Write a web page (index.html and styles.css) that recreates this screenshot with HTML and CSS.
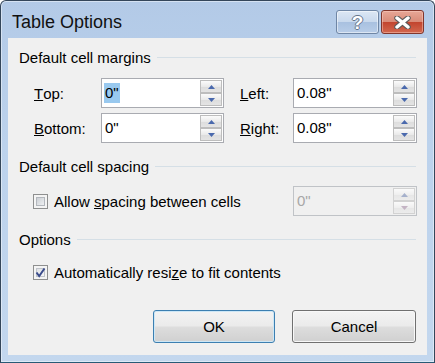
FILE: index.html
```html
<!DOCTYPE html>
<html lang="en">
<head>
    <meta charset="UTF-8">
    <meta name="viewport" content="width=device-width, initial-scale=1.0">
    <title>Table Options</title>
    <link rel="stylesheet" href="styles.css">
</head>
<body>
    <div class="window">
        <div class="titlebar">
            <span class="title">Table Options</span>
            <div class="caption-buttons">
                <span class="cap-btn help-btn">?</span>
                <span class="cap-btn close-btn">
                    <svg width="17" height="13" viewBox="0 0 17 13">
                        <path d="M3 2 L14 11 M14 2 L3 11" stroke="#5a5a5a" stroke-width="5.5" stroke-linecap="round"/>
                        <path d="M3 2 L14 11 M14 2 L3 11" stroke="#ffffff" stroke-width="3.5" stroke-linecap="round"/>
                    </svg>
                </span>
            </div>
        </div>

        <div class="client">
            <!-- margins -->
            <div class="group-head">
                <span>Default cell margins</span>
                <span class="rule"></span>
            </div>
            <div class="margins">
                <label class="field-label"><u>T</u>op:</label>
                <div class="spin-box">
                    <span class="value"><span class="selected">0"</span></span>
                    <div class="spinner">
                        <span class="spin-btn"><svg width="7" height="4"><polygon points="0,4 7,4 3.5,0" fill="#4a69ad"/></svg></span>
                        <span class="spin-btn"><svg width="7" height="4"><polygon points="0,0 7,0 3.5,4" fill="#4a69ad"/></svg></span>
                    </div>
                </div>
                <label class="field-label right-col"><u>L</u>eft:</label>
                <div class="spin-box">
                    <span class="value">0.08"</span>
                    <div class="spinner">
                        <span class="spin-btn"><svg width="7" height="4"><polygon points="0,4 7,4 3.5,0" fill="#4a69ad"/></svg></span>
                        <span class="spin-btn"><svg width="7" height="4"><polygon points="0,0 7,0 3.5,4" fill="#4a69ad"/></svg></span>
                    </div>
                </div>

                <label class="field-label"><u>B</u>ottom:</label>
                <div class="spin-box">
                    <span class="value">0"</span>
                    <div class="spinner">
                        <span class="spin-btn"><svg width="7" height="4"><polygon points="0,4 7,4 3.5,0" fill="#4a69ad"/></svg></span>
                        <span class="spin-btn"><svg width="7" height="4"><polygon points="0,0 7,0 3.5,4" fill="#4a69ad"/></svg></span>
                    </div>
                </div>
                <label class="field-label right-col"><u>R</u>ight:</label>
                <div class="spin-box">
                    <span class="value">0.08"</span>
                    <div class="spinner">
                        <span class="spin-btn"><svg width="7" height="4"><polygon points="0,4 7,4 3.5,0" fill="#4a69ad"/></svg></span>
                        <span class="spin-btn"><svg width="7" height="4"><polygon points="0,0 7,0 3.5,4" fill="#4a69ad"/></svg></span>
                    </div>
                </div>
            </div>

            <!-- spacing -->
            <div class="group-head spaced">
                <span>Default cell spacing</span>
                <span class="rule"></span>
            </div>
            <div class="spacing-row">
                <span class="check"><span class="check-inner"></span></span>
                <span class="check-text">Allow <u>s</u>pacing between cells</span>
                <div class="spin-box disabled">
                    <span class="value">0"</span>
                    <div class="spinner">
                        <span class="spin-btn"><svg width="7" height="4"><polygon points="0,4 7,4 3.5,0" fill="#a6b1cc"/></svg></span>
                        <span class="spin-btn"><svg width="7" height="4"><polygon points="0,0 7,0 3.5,4" fill="#c4b4c4"/></svg></span>
                    </div>
                </div>
            </div>

            <!-- options -->
            <div class="group-head spaced">
                <span>Options</span>
                <span class="rule"></span>
            </div>
            <div class="option-row">
                <span class="check checked">
                    <span class="check-inner"></span>
                    <svg class="tick" width="13" height="13" viewBox="0 0 13 13">
                        <path d="M2.5 6.5 L5.2 10 L10.5 2.5" stroke="#3b4c8c" stroke-width="2" fill="none"/>
                    </svg>
                </span>
                <span class="check-text">Automatically resi<u>z</u>e to fit contents</span>
            </div>

            <div class="dialog-buttons">
                <button type="button" class="btn default">OK</button>
                <button type="button" class="btn cancel">Cancel</button>
            </div>
        </div>
    </div>
</body>
</html>
```
FILE: styles.css
```css
body {
    margin: 0;
    font-family: "Liberation Sans", Arial, sans-serif;
    font-size: 15px;
    line-height: 17px;
    color: #000;
    background: #fff;
}
.window {
    width: 435px;
    height: 363px;
    box-sizing: border-box;
    border: 1px solid #34465a;
    border-bottom-color: #285a76;
    border-radius: 6px 6px 0 0;
    background: linear-gradient(#b3cae7, #bcd2ec 40%, #c3d7ee);
    box-shadow: inset 0 0 0 1px rgba(255, 255, 255, 0.45);
}
.titlebar {
    height: 37px;
    display: flex;
    justify-content: space-between;
}
.title {
    font-size: 18px;
    line-height: 21px;
    padding: 11px 0 0 11px;
    color: #111;
}
.caption-buttons {
    display: flex;
    gap: 2px;
    margin: 9px 10px 0 0;
}
.cap-btn {
    width: 43px;
    height: 24px;
    box-sizing: border-box;
    border-radius: 3px;
    display: flex;
    align-items: center;
    justify-content: center;
}
.help-btn {
    border: 1px solid #6f86a5;
    background: linear-gradient(#dce7f4, #c9d9ed 48%, #a9c1e0 52%, #b8cde8);
    box-shadow: inset 0 0 0 1px rgba(255, 255, 255, 0.5);
    color: #fff;
    font-weight: bold;
    font-size: 19px;
    text-shadow: 1px 0 0 #66768c, -1px 0 0 #66768c, 0 1px 0 #66768c, 0 -1px 0 #66768c;
}
.close-btn {
    border: 1px solid #81362c;
    background: linear-gradient(#e7a797, #d98c79 48%, #c2452f 52%, #d3684f);
    box-shadow: inset 0 0 0 1px rgba(255, 210, 200, 0.45);
}
.client {
    margin: 0 7px;
    height: 317px;
    box-sizing: border-box;
    padding: 11px 10px 0 11px;
    background: #f0f0f0;
}
.group-head {
    display: flex;
    align-items: center;
    gap: 6px;
    height: 17px;
    margin-right: 1px;
}
.group-head.spaced {
    margin-top: 15px;
}
.rule {
    flex: 1;
    height: 1px;
    background: #d5dfe6;
}
.margins {
    display: grid;
    grid-template-columns: 67px 123px 69px 124px;
    grid-auto-rows: 30px;
    row-gap: 5px;
    margin: 12px 0 0 15px;
}
.field-label {
    display: flex;
    align-items: center;
}
.right-col {
    padding-left: 16px;
}
.spin-box {
    display: flex;
    align-items: center;
    box-sizing: border-box;
    height: 30px;
    border: 1px solid #a9abb1;
    background: #fff;
    padding: 0 1px 0 2px;
}
.value {
    flex: 1;
    line-height: 20px;
    padding-left: 1px;
}
.selected {
    background: #99c9ef;
    display: inline-block;
    padding: 0 1px 0 0;
    margin-left: -1px;
    padding-left: 1px;
}
.spinner {
    display: flex;
    flex-direction: column;
    width: 22px;
}
.spin-btn {
    height: 13px;
    box-sizing: border-box;
    border: 1px solid #bdbdbd;
    background: linear-gradient(#fbfbfb, #eaeaea 50%, #dcdcdc 51%, #e4e4e4);
    display: flex;
    align-items: center;
    justify-content: center;
}
.spin-box.disabled {
    width: 124px;
    margin-left: auto;
    border-color: #c0c3c7;
    background: #f0f0f0;
    color: #a7a7a7;
}
.spin-box.disabled .spin-btn {
    border-color: #d2d2d2;
    background: linear-gradient(#fafafa, #efefef 50%, #e6e6e6 51%, #ececec);
}
.spacing-row {
    display: flex;
    align-items: center;
    height: 30px;
    margin-top: 11px;
    padding-left: 14px;
}
.option-row {
    display: flex;
    align-items: center;
    height: 17px;
    margin-top: 16px;
    padding-left: 14px;
}
.check {
    position: relative;
    width: 15px;
    height: 15px;
    box-sizing: border-box;
    border: 1px solid #8e8f8f;
    background: #f4f4f4;
    padding: 2px;
    flex: none;
}
.check-inner {
    display: block;
    width: 9px;
    height: 9px;
    box-sizing: border-box;
    border: 1px solid #b3b7bd;
    background: linear-gradient(135deg, #cbcfd4, #eef0f2);
}
.check.checked .check-inner {
    border-color: #c0c4ca;
    background: linear-gradient(135deg, #dfe2e6, #f7f7f7);
}
.tick {
    position: absolute;
    left: 0;
    top: 0;
}
.check-text {
    margin-left: 6px;
}
.dialog-buttons {
    display: flex;
    justify-content: flex-end;
    gap: 17px;
    margin: 29px 1px 0 0;
}
.btn {
    height: 33px;
    box-sizing: border-box;
    border-radius: 3px;
    font-family: inherit;
    font-size: 15px;
    color: #000;
    padding: 0;
    background: linear-gradient(#f3f3f3, #ebebeb 48%, #dddddd 52%, #d0d0d0);
}
.btn.default {
    width: 122px;
    border: 1px solid #3c7fb1;
    box-shadow: inset 0 0 0 1px #cde7f6;
}
.btn.cancel {
    width: 124px;
    border: 1px solid #707070;
    box-shadow: inset 0 0 0 1px #f8f8f8;
}
```
